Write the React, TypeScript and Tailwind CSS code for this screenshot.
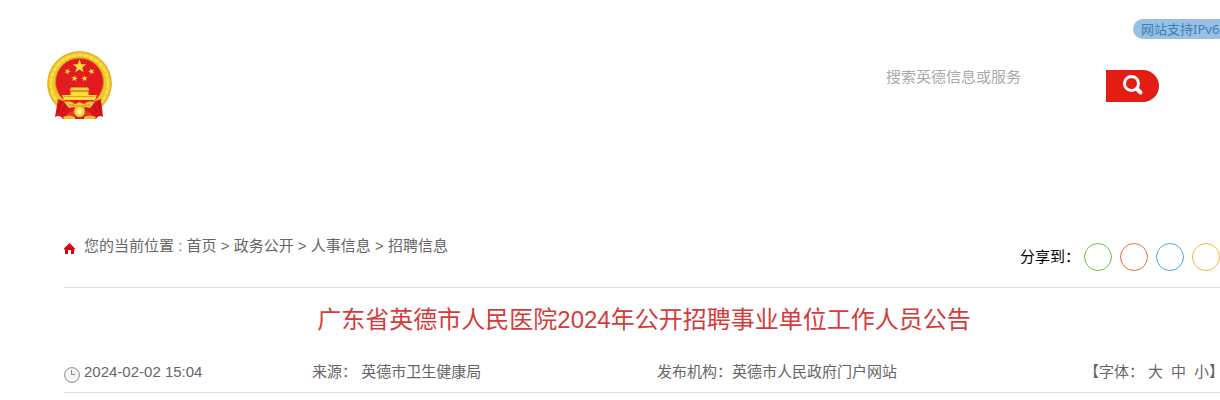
import React from 'react'

const crumbs = ['首页', '政务公开', '人事信息', '招聘信息']

const shares = [
  { name: '微信', color: 'border-[#6cbf3f]' },
  { name: '微博', color: 'border-[#ee6b3c]' },
  { name: 'QQ', color: 'border-[#48a9e0]' },
  { name: 'QQ空间', color: 'border-[#f5b92f]' },
]

const STAR = 'M0 -10L2.35 -3.24L9.51 -3.09L3.8 1.24L5.88 8.09L0 4L-5.88 8.09L-3.8 1.24L-9.51 -3.09L-2.35 -3.24Z'

const Emblem = () => (
  <svg width="66" height="68" viewBox="0 0 66 68" role="img" aria-label="国徽">
    <circle cx="33.500" cy="32.500" r="32.200" fill="#efc52c" />
    <circle cx="33.500" cy="32.500" r="31.700" fill="none" stroke="#dfac22" strokeWidth="1" />
    <circle cx="33.500" cy="32.500" r="28.500" fill="none" stroke="#f9df4c" strokeWidth="2.500" strokeDasharray="5 1" />
    <circle cx="33.500" cy="31" r="24" fill="#e31a1f" stroke="#cf9519" strokeWidth="1" />
    <path d="M12 48Q33 57 55 48L57 66Q53 63 50 68H17Q14 63 9 66Z" fill="#da161d" />
    <g fill="#fbdc3b">
      <path d={STAR} transform="translate(33.500 15.500) scale(.72)" />
      <path d={STAR} transform="translate(21.500 20.500) rotate(20) scale(.34)" />
      <path d={STAR} transform="translate(45.500 20.500) rotate(-20) scale(.34)" />
      <path d={STAR} transform="translate(28.500 27.500) rotate(10) scale(.34)" />
      <path d={STAR} transform="translate(38.500 27.500) rotate(-10) scale(.34)" />
      <path d="M25 36.500H42L43.500 39.500H23.500Z" />
      <path d="M24.500 40.500H42.500V44H51L49 49H18L16 44H24.500Z" />
    </g>
    <path d="M25 40H42M18 45.500H49" stroke="#dda521" strokeWidth="1" />
    <path d="M15 50L12 62M20 52L16 61M52 50L55 62M47 52L51 61" stroke="#ad1018" strokeWidth="1" />
    <path d="M18 51Q25 49 29 53L33.500 51L38 53Q42 49 49 51L44 57L39 56L33.500 60L28 56L23 57Z" fill="#f3cb36" />
    <path d="M23 54L28 54L33.500 56L39 54L44 54" fill="none" stroke="#cb8d1c" strokeWidth="1" />
    <path d="M20 66Q22 59 28 60V66ZM47 66Q45 59 39 60V66Z" fill="#e53428" />
    <circle cx="33.500" cy="60.500" r="5.500" fill="#f7d83f" stroke="#d09421" strokeWidth="1" />
    <circle cx="33.500" cy="60.500" r="2.500" fill="#fff0a0" />
    <path d="M17 66Q23 63 29 66V68H18ZM50 66Q44 63 38 66V68H49Z" fill="#edc12e" />
  </svg>
)

const HomeIcon = () => (
  <svg className="mt-1" width="11" height="11" viewBox="0 0 11 11" aria-hidden="true">
    <path d="M5.500 0L11 5.500V6.500H10V11H7V7H4V11H1V6.500H0V5.500Z" fill="#d9000f" />
  </svg>
)

const ClockIcon = () => (
  <svg className="mt-[5px]" width="16" height="16" viewBox="0 0 16 16" fill="none" stroke="#8b8b8b" aria-hidden="true">
    <circle cx="8" cy="8" r="7.400" fill="#f5f5f5" />
    <path d="M7.500 3V7.500H11" />
  </svg>
)

const App = () => {
  return (
    <div className="overflow-hidden bg-white pb-2 text-[15px] leading-5 text-[#666] font-['Liberation_Sans','Noto_Sans_CJK_SC',sans-serif]">
      <header>
        <div className="flex justify-end pt-[19px]">
          <a
            href="#ipv6"
            className="w-[87px] h-5 overflow-hidden whitespace-nowrap rounded-l-full bg-[#97c0e4] pl-2 text-[13px] text-[#3f7eb5] font-['Noto_Sans','Noto_Sans_CJK_SC',sans-serif]"
          >
            网站支持IPv6
          </a>
        </div>
        <div className="flex items-start justify-between pl-[46px] pr-[61px] pt-3">
          <Emblem />
          <form className="mt-[19px] flex items-start" onSubmit={(e) => e.preventDefault()}>
            <input
              type="text"
              aria-label="搜索"
              placeholder="搜索英德信息或服务"
              className="h-3.5 w-[220px] bg-transparent leading-4 outline-none placeholder:text-[#aaa]"
            />
            <button type="submit" aria-label="搜索" className="flex h-8 w-[53px] justify-center rounded-r-full bg-[#e31c14] pt-1">
              <svg width="22" height="22" viewBox="0 0 22 22" fill="none" stroke="#fff" aria-hidden="true">
                <circle cx="9.500" cy="9.500" r="7" strokeWidth="3" />
                <path d="M15 15L18.500 18.500" strokeWidth="4" strokeLinecap="round" />
              </svg>
            </button>
          </form>
        </div>
      </header>

      <main className="-mr-1 pl-16 pt-[116px]">
        <div className="flex items-start justify-between border-b border-[#ddd]">
          <nav aria-label="当前位置" className="flex items-center gap-[9px] pt-px">
            <HomeIcon />
            <p>
              您的当前位置 :{' '}
              {crumbs.map((c, i) => (
                <React.Fragment key={c}>
                  {i > 0 && ' > '}
                  <a href="#crumb">{c}</a>
                </React.Fragment>
              ))}
            </p>
          </nav>
          <div className="flex items-center pb-4 pr-1 pt-2 text-black">
            <span className="mr-1">分享到：</span>
            <div className="flex gap-2">
              {shares.map((s) => (
                <a key={s.name} href="#share" aria-label={s.name} className={`size-7 rounded-full border ${s.color}`} />
              ))}
            </div>
          </div>
        </div>

        <h1 className="pt-4 text-center text-2xl leading-8 text-[#d63b3b]">广东省英德市人民医院2024年公开招聘事业单位工作人员公告</h1>

        <div className="mt-[26px] grid grid-cols-[248fr_345fr_427fr_136fr] whitespace-nowrap border-b border-[#ddd] pb-2.5">
          <div className="flex h-5 gap-1">
            <ClockIcon />
            <time dateTime="2024-02-02T15:04">2024-02-02 15:04</time>
          </div>
          <p>来源： 英德市卫生健康局</p>
          <p>发布机构：英德市人民政府门户网站</p>
          <div className="flex justify-end">
            <span className="mr-1">【字体：</span>
            <div className="flex gap-2">
              <button type="button">大</button>
              <button type="button">中</button>
              <button type="button">小</button>
            </div>
            <span>】</span>
          </div>
        </div>
      </main>
    </div>
  )
}

export default App
